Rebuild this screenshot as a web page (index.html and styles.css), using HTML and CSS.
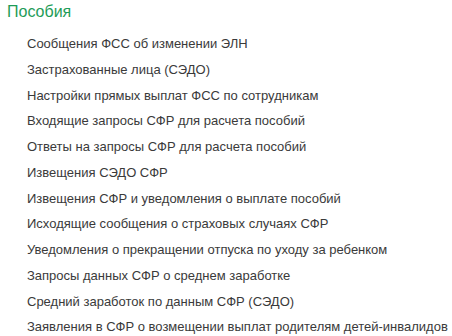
FILE: index.html
```html
<!DOCTYPE html>
<html>
<head>
  <title>Пособия</title>
  <link rel="stylesheet" href="styles.css">
</head>
<body>
  <div class="group">
    <div class="group-title">Пособия</div>
    <ul class="links">
      <li><a href="#">Сообщения ФСС об изменении ЭЛН</a></li>
      <li><a href="#">Застрахованные лица (СЭДО)</a></li>
      <li><a href="#">Настройки прямых выплат ФСС по сотрудникам</a></li>
      <li><a href="#">Входящие запросы СФР для расчета пособий</a></li>
      <li><a href="#">Ответы на запросы СФР для расчета пособий</a></li>
      <li><a href="#">Извещения СЭДО СФР</a></li>
      <li><a href="#">Извещения СФР и уведомления о выплате пособий</a></li>
      <li><a href="#">Исходящие сообщения о страховых случаях СФР</a></li>
      <li><a href="#">Уведомления о прекращении отпуска по уходу за ребенком</a></li>
      <li><a href="#">Запросы данных СФР о среднем заработке</a></li>
      <li><a href="#">Средний заработок по данным СФР (СЭДО)</a></li>
      <li><a href="#">Заявления в СФР о возмещении выплат родителям детей-инвалидов</a></li>
    </ul>
  </div>
</body>
</html>
```

FILE: styles.css
```css
body {
  margin: 0;
  padding: 0;
  background-color: #fff;
  font-family: "Liberation Sans", Arial, sans-serif;
}

.group {
  padding: 2px 0 0 7px;
}

.group-title {
  font-size: 16px;
  line-height: 20px;
  color: #1e9c58;
}

.links {
  list-style: none;
  margin: 0;
  padding: 9px 0 0 20px;
}

.links li {
  height: 25.75px;
  line-height: 25.75px;
  font-size: 13px;
}

.links a {
  color: #3a3a3a;
  text-decoration: none;
}
```
